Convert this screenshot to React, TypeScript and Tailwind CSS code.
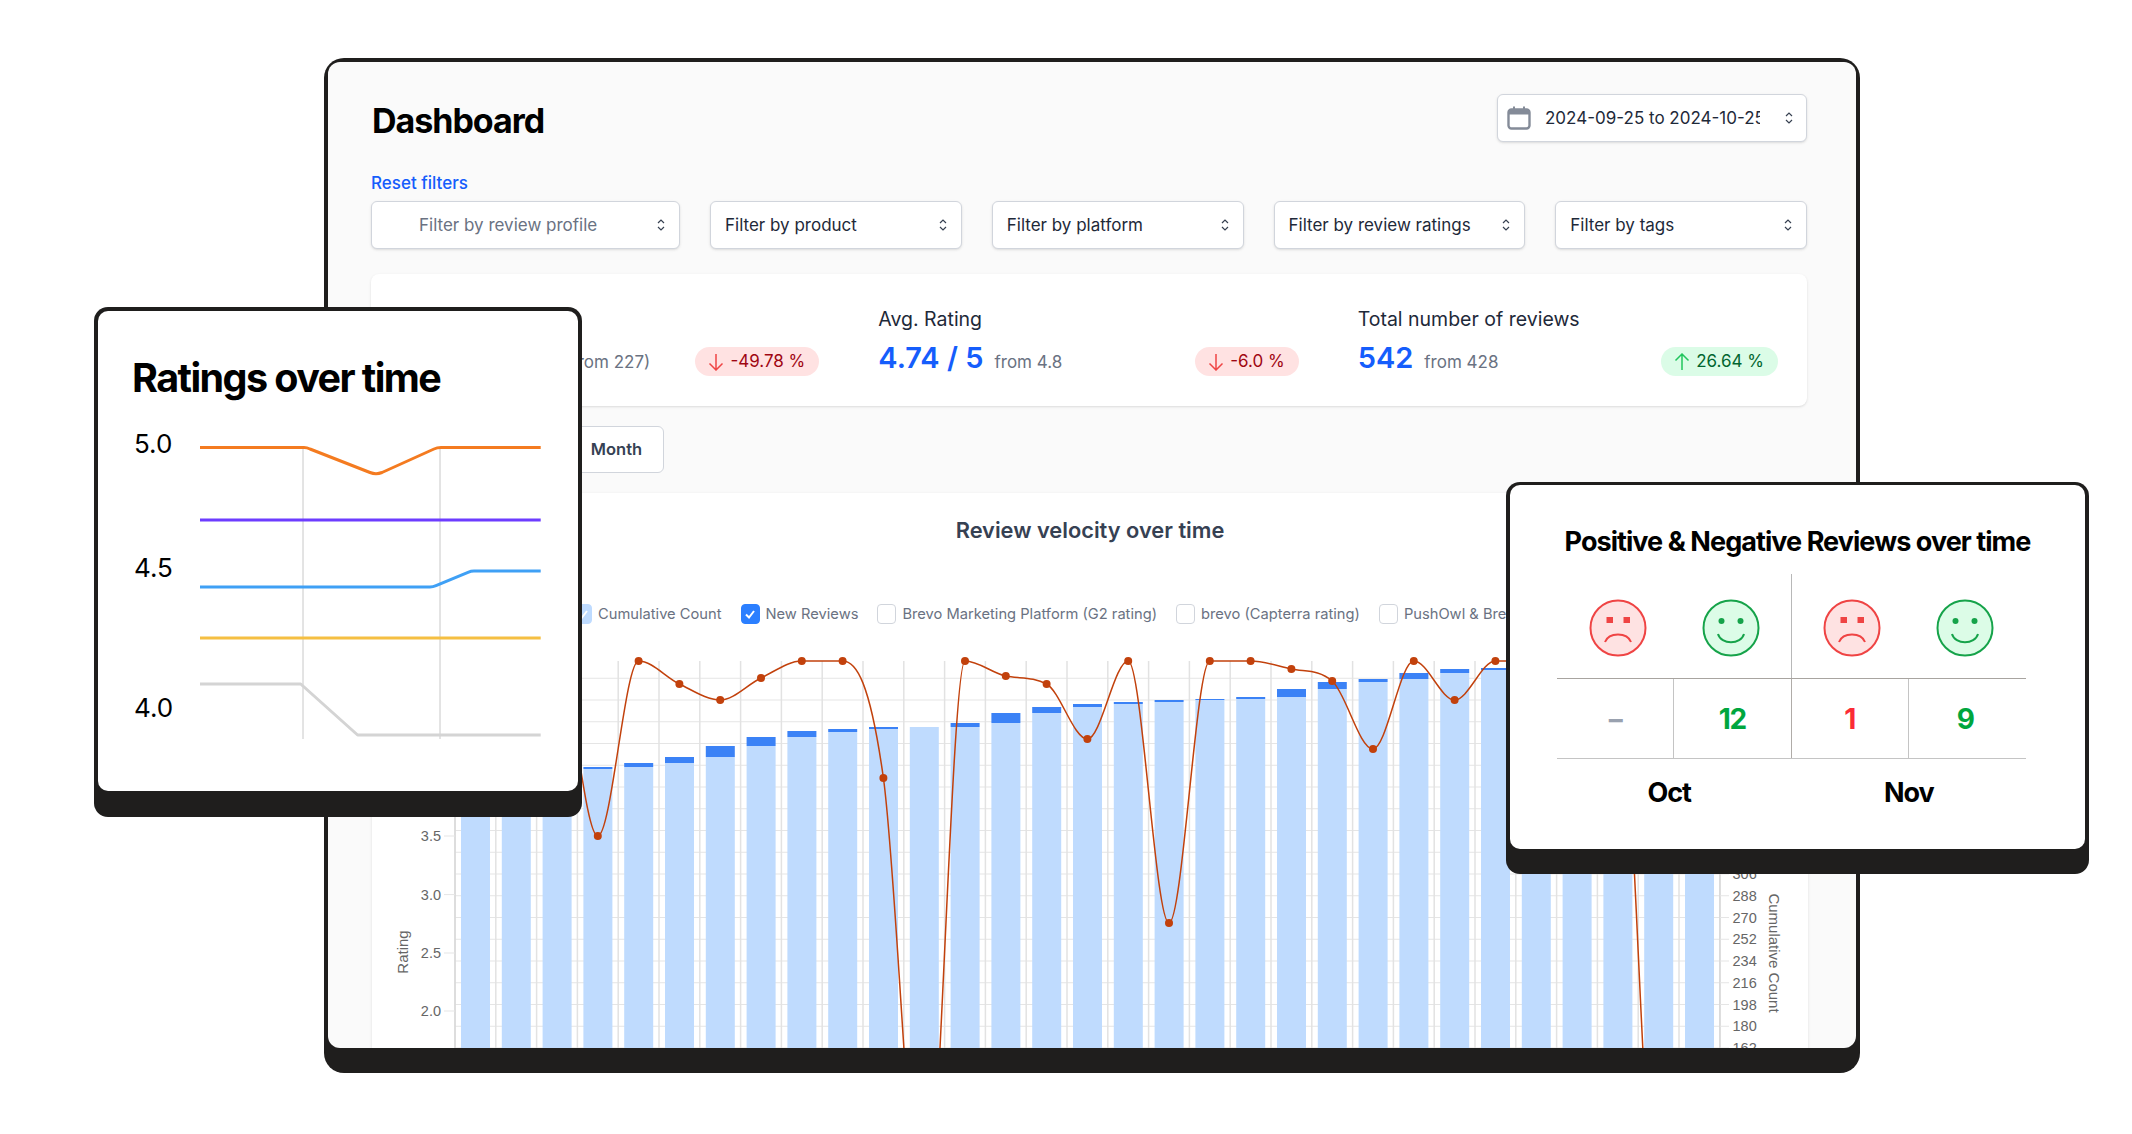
import { FC, ReactNode } from 'react';

const filters = [
  'Filter by product',
  'Filter by platform',
  'Filter by review ratings',
  'Filter by tags',
];

const legend = [
  'Brevo Marketing Platform (G2 rating)',
  'brevo (Capterra rating)',
  'PushOwl & Brevo (Shopify rating)',
];

// top of the dark segment, top of the light segment, in page pixels
const bars: [number, number][] = [
  [790, 792], [780, 783], [772, 775], [767, 769], [763, 767], [757, 763], [746, 757], [737, 746],
  [731, 737], [729, 732], [727, 729], [727, 727], [723, 727], [713, 723], [707, 713], [704, 707],
  [702, 704], [700, 702], [699, 700], [697, 699], [689, 697], [682, 689], [679, 682], [673, 679],
  [669, 673], [668, 670], [664, 668], [660, 664], [655, 660], [652, 655], [650, 652],
];

const ratingY = [
  661, 661, 661, 836, 661, 684, 700, 678, 661, 661, 778, 1243, 661, 676, 684, 739, 661, 923, 661,
  661, 669, 681, 749, 661, 700, 661, 661, 661, 661, 1243, 1243,
];

const barX = (k: number) => 461 + 40.8 * k;
const centerX = (k: number) => 475.4 + 40.8 * k;

// monotone cubic, same as chart.js cubicInterpolationMode: 'monotone'
const buildCurve = () => {
  const dx = 40.8;
  const n = ratingY.length;
  const delta = ratingY.slice(1).map((y, i) => (y - ratingY[i]) / dx);
  const m = ratingY.map((_, i) => {
    if (i === 0) return delta[0];
    if (i === n - 1) return delta[n - 2];
    return delta[i - 1] * delta[i] <= 0 ? 0 : (delta[i - 1] + delta[i]) / 2;
  });
  delta.forEach((d, i) => {
    if (d === 0) {
      m[i] = 0;
      m[i + 1] = 0;
      return;
    }
    const a = m[i] / d;
    const b = m[i + 1] / d;
    const s = a * a + b * b;
    if (s > 9) {
      const tau = 3 / Math.sqrt(s);
      m[i] = a * tau * d;
      m[i + 1] = b * tau * d;
    }
  });
  let path = `M${centerX(0)} ${ratingY[0]}`;
  for (let i = 1; i < n; i++) {
    const x0 = centerX(i - 1);
    const x1 = centerX(i);
    path += ` C${x0 + dx / 3} ${ratingY[i - 1] + (m[i - 1] * dx) / 3} ${x1 - dx / 3} ${ratingY[i] - (m[i] * dx) / 3} ${x1} ${ratingY[i]}`;
  }
  return path;
};

const Chevrons: FC = () => (
  <svg width="10" height="14" viewBox="0 0 10 14" fill="none" stroke="#374151" strokeWidth="1.2" className="shrink-0">
    <path d="M2 5 L5 2 L8 5 M2 9 L5 12 L8 9" />
  </svg>
);

const Select: FC<{ className?: string; children: ReactNode }> = ({ className, children }) => (
  <div
    className={`flex h-12 items-center justify-between rounded-md border border-gray-300 bg-white shadow-sm pr-[13px] ${className}`}
  >
    <span className="translate-y-[1px]">{children}</span>
    <Chevrons />
  </div>
);

const Arrow: FC<{ up?: boolean }> = ({ up }) => (
  <svg
    width="16"
    height="18"
    viewBox="0 0 16 18"
    fill="none"
    stroke={up ? '#22c55e' : '#ef4444'}
    strokeWidth="1.5"
    className={`shrink-0 ${up ? 'rotate-180' : ''}`}
  >
    <path d="M8 1 V17 M1.5 10.5 L8 17 L14.5 10.5" />
  </svg>
);

const Stat: FC<{
  label: string;
  value: string;
  from: string;
  change: string;
  fromGap?: string;
  up?: boolean;
}> = ({ label, value, from, change, fromGap = 'ml-[11px]', up }) => (
  <div>
    <div className="mt-[33px] text-[19.5px] leading-6 text-gray-800">{label}</div>
    <div className="mt-[9px] flex items-end justify-between">
      <div className="flex items-baseline">
        <span className="text-[29px] leading-9 font-semibold text-blue-600">{value}</span>
        <span className={`${fromGap} text-[17px] text-gray-500`}>{from}</span>
      </div>
      <div
        className={`flex h-[29px] items-center gap-[6px] rounded-full pl-[13px] pr-[14px] text-[17px] ${
          up ? 'bg-green-100 text-green-800' : 'bg-red-100 text-red-800'
        }`}
      >
        <Arrow up={up} />
        {change}
      </div>
    </div>
  </div>
);

const Check: FC<{ state: 'off' | 'on' | 'faded' }> = ({ state }) => (
  <span
    className={`flex h-5 w-[19px] shrink-0 items-center justify-center rounded border ${
      state === 'on'
        ? 'border-blue-500 bg-blue-500'
        : state === 'faded'
          ? 'border-blue-200 bg-blue-200'
          : 'border-gray-300 bg-white'
    }`}
  >
    {state !== 'off' && (
      <svg width="12" height="12" viewBox="0 0 12 12" fill="none" stroke="white" strokeWidth="2">
        <path d="M2 6.5 L5 9.5 L10 3" />
      </svg>
    )}
  </span>
);

const Chart: FC = () => {
  const hLines = Array.from({ length: 19 }, (_, i) => 1048 - 21.75 * i).filter((y) => y > 665);
  const vLines = Array.from({ length: 32 }, (_, i) => 455 + 40.8 * i);
  const left = [
    ['5.0', 661], ['4.5', 719], ['4.0', 778], ['3.5', 836], ['3.0', 894.6], ['2.5', 953], ['2.0', 1011],
  ] as const;
  const right = [162, 180, 198, 216, 234, 252, 270, 288, 306];

  return (
    <svg viewBox="372 640 1436 408" className="mt-4 block h-[408px] w-[1436px] font-['Liberation_Sans',sans-serif]">
      {hLines.map((y) => (
        <line key={y} x1="455" x2="1720" y1={y} y2={y} stroke="#e5e5e5" />
      ))}
      {vLines.map((x) => (
        <line key={x} x1={x} x2={x} y1="661" y2="1048" stroke="#e2e2e2" strokeWidth="1.5" />
      ))}
      <line x1="455" x2="455" y1="661" y2="1048" stroke="#d9d9d9" strokeWidth="1.5" />
      <line x1="1720" x2="1720" y1="661" y2="1048" stroke="#d9d9d9" strokeWidth="1.5" />
      {bars.map(([dark, light], k) => (
        <g key={k}>
          <rect x={barX(k)} y={light} width="29" height={1048 - light} fill="#bfdbfe" />
          <rect x={barX(k)} y={dark} width="29" height={light - dark} fill="#3b82f6" />
        </g>
      ))}
      <path d={buildCurve()} fill="none" stroke="#c2410c" strokeWidth="1.5" />
      {ratingY.map((y, k) => (
        <circle key={k} cx={centerX(k)} cy={y} r="4" fill="#c2410c" />
      ))}
      {left.map(([label, y]) => (
        <g key={label}>
          <line x1="444" x2="455" y1={y} y2={y} stroke="#e5e5e5" />
          <text x="441" y={y + 5} textAnchor="end" fontSize="14.5" fill="#666">
            {label}
          </text>
        </g>
      ))}
      {right.map((value, i) => (
        <g key={value}>
          <line x1="1720" x2="1729" y1={1048 - 21.75 * i} y2={1048 - 21.75 * i} stroke="#e5e5e5" />
          <text x="1732.5" y={1048 - 21.75 * i + 5} fontSize="14.5" fill="#666">
            {value}
          </text>
        </g>
      ))}
      <text transform="translate(408 952) rotate(-90)" textAnchor="middle" fontSize="15" fill="#666">
        Rating
      </text>
      <text transform="translate(1769 953) rotate(90)" textAnchor="middle" fontSize="15" fill="#666">
        Cumulative Count
      </text>
    </svg>
  );
};

const RatingsCard: FC = () => (
  <div className="absolute left-[94px] top-[307px] w-[488px] rounded-[14px] bg-[#1f1e1d] px-1 pb-[26px] pt-1">
    <div className="h-[480px] rounded-[10px] bg-white">
      <h2 className="pl-[34px] pt-[46px] text-[39.5px] leading-[42px] font-bold tracking-[-0.04em] text-black">
        Ratings over time
      </h2>
      <svg viewBox="98 420 481 340" className="mt-[21px] block h-[340px] w-[481px]">
        <line x1="303" x2="303" y1="448" y2="739" stroke="#c8c8c8" />
        <line x1="440" x2="440" y1="448" y2="739" stroke="#c8c8c8" />
        <g fill="none" strokeWidth="3" strokeLinejoin="round">
          <path d="M200 447.6 H304 Q307 447.6 310 449 L370 472.5 Q376 475 382 472.5 L434 449 Q437 447.6 441 447.6 H540.7" stroke="#f47b20" />
          <path d="M200 520 H540.7" stroke="#6d3cff" />
          <path d="M200 587 H430 Q433 587 436 585.7 L468 572.3 Q471 571 474 571 H540.7" stroke="#3fa0f5" />
          <path d="M200 638 H540.7" stroke="#f5bf42" />
          <path d="M200 684 H300.7 L357.6 735 H540.7" stroke="#d4d4d4" />
        </g>
        <g fontSize="26" fill="#000" fontFamily="Inter, sans-serif">
          <text x="134" y="453">5.0</text>
          <text x="134" y="576.5">4.5</text>
          <text x="134" y="716.5">4.0</text>
        </g>
      </svg>
    </div>
  </div>
);

const Face: FC<{ good?: boolean; shift: string }> = ({ good, shift }) => (
  <svg width="60" height="60" viewBox="-30 -30 60 60" className={`mx-auto block ${shift}`}>
    <circle r="27.5" fill={good ? '#dcfce7' : '#fee2e2'} stroke={good ? '#16a34a' : '#ef4444'} strokeWidth="2" />
    {good ? (
      <g>
        <circle cx="-9.5" cy="-7" r="3" fill="#16a34a" />
        <circle cx="9.5" cy="-7" r="3" fill="#16a34a" />
        <path d="M-13 6 C-10 17 10 17 13 6" fill="none" stroke="#16a34a" strokeWidth="2" />
      </g>
    ) : (
      <g>
        <rect x="-11.5" y="-11" width="6.5" height="6" fill="#ef4444" />
        <rect x="5.5" y="-11" width="6.5" height="6" fill="#ef4444" />
        <path d="M-13 14 C-9 4 9 4 13 14" fill="none" stroke="#ef4444" strokeWidth="2" />
      </g>
    )}
  </svg>
);

const SentimentCard: FC = () => (
  <div className="absolute left-[1506px] top-[482px] w-[583px] rounded-[14px] bg-[#1f1e1d] px-1 pb-[25px] pt-[3px]">
    <div className="h-[364px] rounded-[10px] bg-white pt-[41px]">
      <h2 className="text-center text-[27px] leading-8 font-bold tracking-[-0.035em] text-black">
        Positive &amp; Negative Reviews over time
      </h2>
      <div className="ml-[47px] mt-4 w-[469px]">
        <div className="grid h-[105px] grid-cols-2 border-b border-[#a8a4a0]">
          <div className="grid grid-cols-2 items-center border-r border-[#b8b8b8] pt-1">
            <Face shift="translate-x-[3px]" />
            <Face good shift="-translate-x-[1px]" />
          </div>
          <div className="grid grid-cols-2 items-center pt-1">
            <Face shift="translate-x-[2px]" />
            <Face good shift="-translate-x-[2px]" />
          </div>
        </div>
        <div className="grid h-[80px] grid-cols-4 items-center border-b border-[#c4c4c4] text-center text-[28px] font-bold tracking-[-0.04em]">
          <div className="flex h-full items-center justify-center border-r border-[#c4c4c4] text-gray-400">–</div>
          <div className="flex h-full items-center justify-center border-r border-[#b0aca8] text-green-600">12</div>
          <div className="flex h-full items-center justify-center border-r border-[#c4c4c4] text-red-500">1</div>
          <div className="flex h-full items-center justify-center pr-1 text-green-600">9</div>
        </div>
        <div className="mt-4 grid grid-cols-2 text-center text-[27px] leading-9 font-bold tracking-[-0.04em] text-black">
          <div className="pr-[10px]">Oct</div>
          <div>Nov</div>
        </div>
      </div>
    </div>
  </div>
);

const App: FC = () => {
  return (
    <div className="relative h-[1134px] w-[2132px] overflow-hidden bg-white font-['Inter',sans-serif]">
      <div className="ml-[324px] mt-[58px] h-[1015px] w-[1536px] overflow-hidden rounded-[20px] bg-[#1f1e1d] px-1 pb-[25px] pt-1">
        <div className="h-[986px] overflow-hidden rounded-[12px] bg-[#fafafa] pl-[43px] pr-[49px] pt-8">
          <div className="flex h-12 items-center justify-between">
            <h1 className="pl-[1px] pt-1 text-[34px] font-bold tracking-[-0.03em] text-black">Dashboard</h1>
            <div className="flex h-12 w-[310px] items-center rounded-md border border-gray-300 bg-white pl-[9px] pr-[12px] shadow-sm">
              <svg width="24" height="24" viewBox="0 0 24 24" className="shrink-0">
                <rect x="1.5" y="3.5" width="21" height="19" rx="3" fill="white" stroke="#848b98" strokeWidth="2.4" />
                <path d="M1.5 6.5 Q1.5 3 4.5 3 H19.5 Q22.5 3 22.5 6.5 V8.5 H1.5 Z" fill="#848b98" />
                <rect x="6" y="0.5" width="2" height="4" fill="#848b98" />
                <rect x="16" y="0.5" width="2" height="4" fill="#848b98" />
              </svg>
              <span className="ml-[14px] w-[215px] translate-y-[1px] overflow-hidden whitespace-nowrap text-[17px] text-gray-800">
                2024-09-25 to 2024-10-25
              </span>
              <span className="ml-auto">
                <Chevrons />
              </span>
            </div>
          </div>

          <div className="mt-[31px] text-[17px] leading-5 font-medium text-blue-600">Reset filters</div>
          <div className="mt-2 flex gap-[30px]">
            <Select className="w-[309px] pl-[47px] text-[17px] text-gray-500">Filter by review profile</Select>
            {filters.map((filter) => (
              <Select key={filter} className="flex-1 pl-[14px] text-[17px] text-gray-800">
                {filter}
              </Select>
            ))}
          </div>

          <div className="mt-[25px] grid h-[132px] grid-cols-3 gap-[59px] rounded-lg bg-white pl-[28px] pr-[29px] shadow-sm">
            <Stat label="Number of reviews" value="114 reviews" from="(from 227)" fromGap="ml-[6px]" change="-49.78 %" />
            <Stat label="Avg. Rating" value="4.74 / 5" from="from 4.8" change="-6.0 %" />
            <Stat label="Total number of reviews" value="542" from="from 428" change="26.64 %" up />
          </div>

          <div className="mt-5 flex h-[47px] w-[293px] rounded-md border border-gray-300 bg-white text-[16.5px] font-semibold text-gray-700">
            <div className="flex w-[99px] items-center justify-center border-r border-gray-300">Day</div>
            <div className="flex w-[99px] items-center justify-center border-r border-gray-300">Week</div>
            <div className="flex flex-1 items-center justify-center">Month</div>
          </div>

          <div className="ml-[1px] mt-5 w-[1436px] bg-white shadow-sm">
            <h3 className="pt-[24px] text-center text-[21.8px] leading-[26px] font-semibold text-gray-700">
              Review velocity over time
            </h3>
            <div className="mt-[61px] flex items-center overflow-hidden whitespace-nowrap pl-[201px] text-[14.7px] leading-5 text-gray-500">
              <Check state="faded" />
              <span className="ml-[6px]">Cumulative Count</span>
              <span className="ml-[19px] flex items-center">
                <Check state="on" />
                <span className="ml-[6px]">New Reviews</span>
              </span>
              {legend.map((item) => (
                <span key={item} className="ml-[19px] flex items-center">
                  <Check state="off" />
                  <span className="ml-[6px]">{item}</span>
                </span>
              ))}
            </div>
            <Chart />
          </div>
        </div>
      </div>

      <RatingsCard />
      <SentimentCard />
    </div>
  );
};

export default App;
